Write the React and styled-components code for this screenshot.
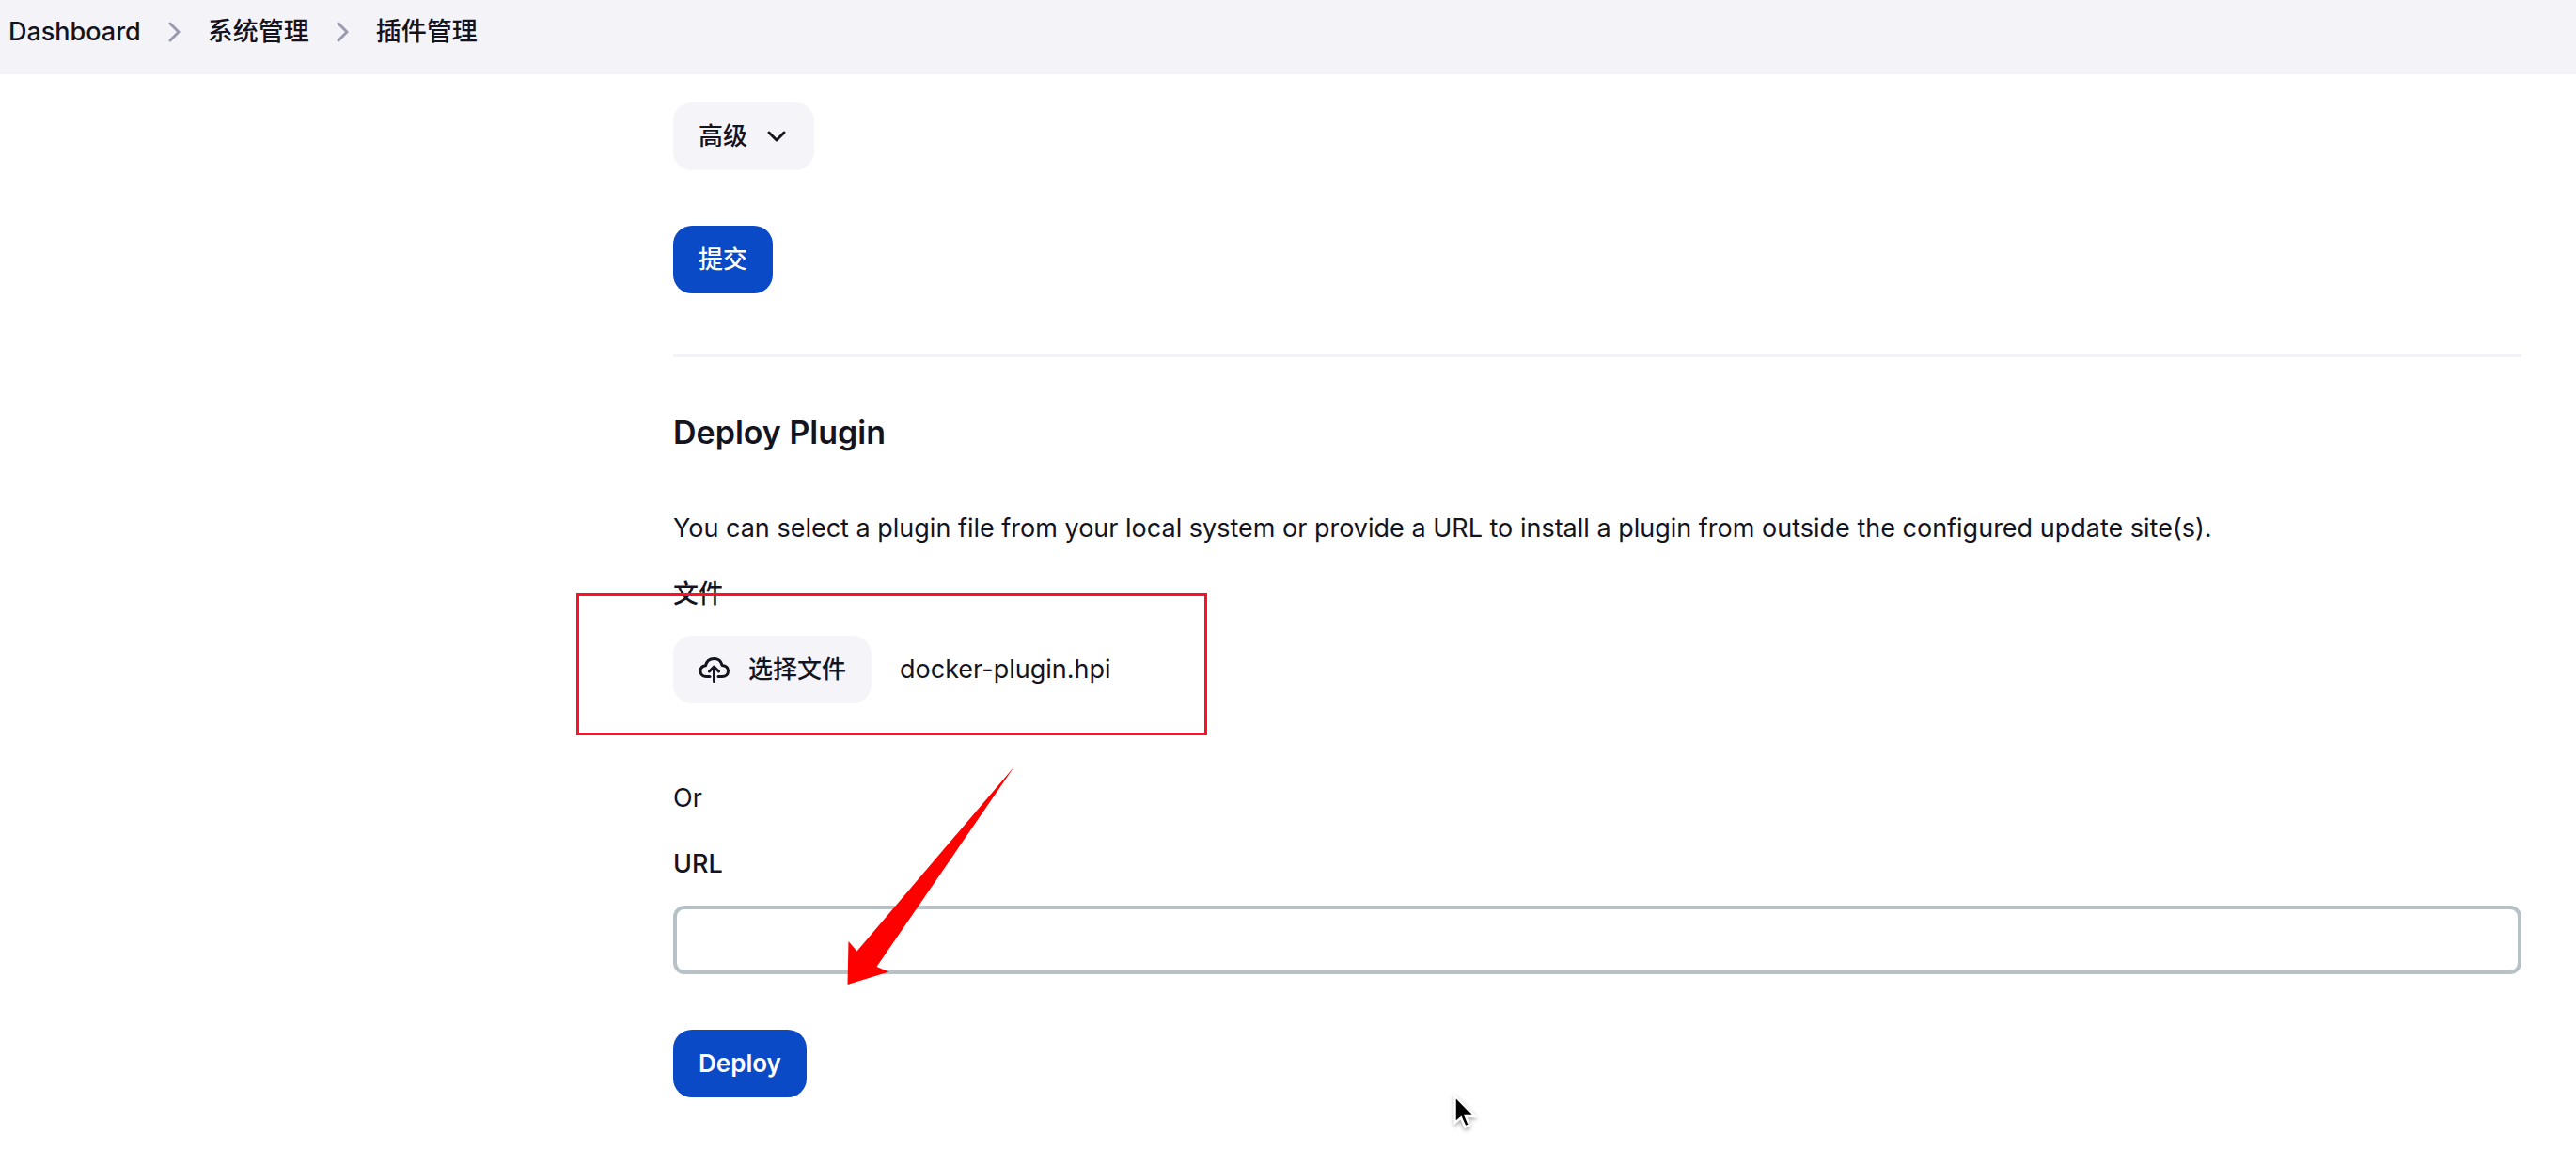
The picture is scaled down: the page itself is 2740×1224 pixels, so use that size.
import React, { useRef, useState } from "react";
import styled, { createGlobalStyle, css } from "styled-components";

const GlobalStyle = createGlobalStyle`
  *, *::before, *::after { box-sizing: border-box; }
  body {
    margin: 0;
    background: #fff;
    color: #14141f;
    font-family: Inter, "Noto Sans CJK SC", sans-serif;
    font-size: 27px;
    line-height: 40px;
  }
`;

const Page = styled.div`
  position: relative;
  overflow: hidden;
`;

const Breadcrumbs = styled.nav`
  padding: 14px 9px 25px;
  background: #f3f3f8;
`;

const CrumbList = styled.ol`
  display: flex;
  align-items: center;
  gap: 29px;
  margin: 0;
  padding: 0;
  list-style: none;
`;

const Crumb = styled.li`
  display: flex;
  align-items: center;
  gap: 29px;
`;

const CrumbLink = styled.a`
  color: inherit;
  font-weight: 500;
  text-decoration: none;
`;

const Layout = styled.div`
  display: grid;
  grid-template-columns: 716px minmax(0, 1fr);
  padding: 30px 58px 48px 0;
`;

const Main = styled.main`
  grid-column: 2;
`;

const Button = styled.button`
  display: inline-flex;
  align-items: center;
  gap: 20px;
  height: 72px;
  padding: 0 27px;
  border: 0;
  border-radius: 20px;
  font: inherit;
  font-size: 26px;
  font-weight: ${({ $strong }) => ($strong ? 600 : 500)};
  cursor: pointer;
  ${({ $primary }) =>
    $primary
      ? css`
          background: #0b4ac6;
          color: #fff;
        `
      : css`
          background: #f4f4f9;
          color: inherit;
        `}
`;

const Block = styled.div`
  display: flex;
  margin-bottom: ${({ $after }) => $after || 0}px;
`;

const Divider = styled.hr`
  height: 4px;
  margin: 0 0 60px;
  border: 0;
  background: #f2f2f8;
`;

const Title = styled.h2`
  margin: 0 0 62px;
  font-size: 34px;
  font-weight: 600;
  line-height: 40px;
`;

const Text = styled.p`
  margin: 0 0 30px;
`;

const FieldLabel = styled.label`
  display: block;
  margin-bottom: 24px;
  font-weight: 500;
`;

const FileRow = styled.div`
  position: relative;
  display: flex;
  align-items: center;
  gap: 30px;
  margin-bottom: 81px;
`;

const HiddenFile = styled.input`
  position: absolute;
  width: 1px;
  height: 1px;
  opacity: 0;
  pointer-events: none;
`;

const UrlInput = styled.input`
  display: block;
  width: 100%;
  height: 73px;
  margin-bottom: 59px;
  padding: 0 20px;
  border: 4px solid #b7c2c7;
  border-radius: 12px;
  background: #fff;
  color: inherit;
  font: inherit;
  outline: 0;
`;

const Highlight = styled.div`
  position: absolute;
  top: -45px;
  left: -103px;
  width: 671px;
  height: 151px;
  border: 3px solid #ff1028;
  pointer-events: none;
`;

const Arrow = styled.svg`
  position: absolute;
  top: 815px;
  left: 901px;
  pointer-events: none;
`;

const Pointer = styled.svg`
  position: absolute;
  top: 1160px;
  left: 1542px;
  pointer-events: none;
  filter: drop-shadow(0 2px 2px rgba(0, 0, 0, 0.35));
`;

function CrumbChevron() {
  return (
    <svg width="13" height="22" viewBox="0 0 13 22" fill="none" aria-hidden="true">
      <path d="M2 2l9 9-9 9" stroke="#9a9ab0" strokeWidth="3" strokeLinecap="round" strokeLinejoin="round" />
    </svg>
  );
}

function DownChevron() {
  return (
    <svg width="24" height="14" viewBox="0 0 24 14" fill="none" aria-hidden="true">
      <path d="M3 3l8 8 8-8" stroke="currentColor" strokeWidth="3" strokeLinecap="round" strokeLinejoin="round" />
    </svg>
  );
}

function CloudUpload() {
  return (
    <svg width="33" height="28" viewBox="0 0 33 28" fill="none" stroke="currentColor" strokeWidth="3" strokeLinecap="round" strokeLinejoin="round" aria-hidden="true">
      <path d="M12 21.5H8.5C4.500 21.500 2 19 2 15.500C2 12.300 4.300 10.300 7.500 9.800C8.600 5.200 12 2.500 16.500 2.500C20.800 2.500 24 5 25 9.500C29 9.800 31.500 12 31.500 15.500C31.500 19.200 29 21.500 25 21.500H21" />
      <path d="M16.500 26.500V11.500M11.500 16L16.500 11L21.500 16" />
    </svg>
  );
}

const crumbs = ["Dashboard", "系统管理", "插件管理"];

export default function App() {
  const picker = useRef(null);
  const [fileName, setFileName] = useState("docker-plugin.hpi");

  return (
    <Page>
      <GlobalStyle />
      <Breadcrumbs aria-label="Breadcrumb">
        <CrumbList>
          {crumbs.map((name, i) => (
            <Crumb key={name}>
              {i > 0 && <CrumbChevron />}
              <CrumbLink href="#">{name}</CrumbLink>
            </Crumb>
          ))}
        </CrumbList>
      </Breadcrumbs>
      <Layout>
        <Main>
          <Block $after={59}>
            <Button type="button">
              高级
              <DownChevron />
            </Button>
          </Block>
          <Block $after={64}>
            <Button type="submit" $primary>提交</Button>
          </Block>
          <Divider />
          <form onSubmit={(e) => e.preventDefault()}>
            <Title>Deploy Plugin</Title>
            <Text>
              You can select a plugin file from your local system or provide a URL to install a plugin from outside the configured update site(s).
            </Text>
            <FieldLabel htmlFor="plugin-file">文件</FieldLabel>
            <FileRow>
              <HiddenFile
                ref={picker}
                id="plugin-file"
                type="file"
                tabIndex={-1}
                onChange={(e) => e.target.files[0] && setFileName(e.target.files[0].name)}
              />
              <Button type="button" onClick={() => picker.current.click()}>
                <CloudUpload />
                选择文件
              </Button>
              <output htmlFor="plugin-file">{fileName}</output>
              <Highlight />
            </FileRow>
            <Text>Or</Text>
            <FieldLabel htmlFor="plugin-url">URL</FieldLabel>
            <UrlInput id="plugin-url" type="text" />
            <Block>
              <Button type="submit" $primary $strong>Deploy</Button>
            </Block>
          </form>
        </Main>
      </Layout>
      <Arrow width="178" height="233" viewBox="0 0 178 233" aria-hidden="true">
        <path d="M178 0L31.500 213L44.500 218.500L0.500 232L1.500 186L10.500 196.500Z" fill="#ff0000" />
      </Arrow>
      <Pointer width="32" height="44" viewBox="0 0 32 44" aria-hidden="true">
        <path d="M5.500 5.500V34L12 28.500L16.500 38.500L21 36.500L17 27H26.500Z" fill="#000" stroke="#fff" strokeWidth="2.500" />
      </Pointer>
    </Page>
  );
}
